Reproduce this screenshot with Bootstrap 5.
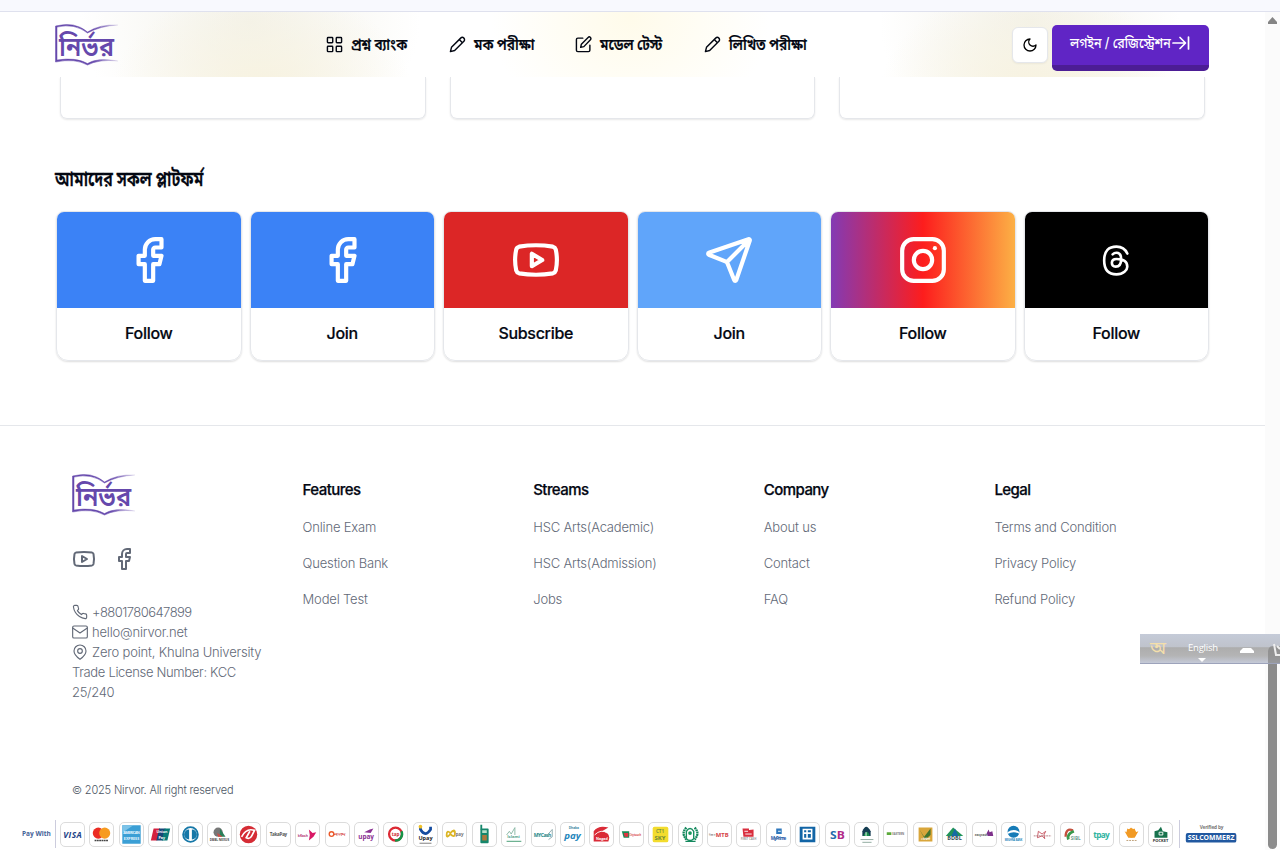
<!DOCTYPE html>
<html lang="bn">
<head>
<meta charset="utf-8">
<meta name="viewport" content="width=device-width, initial-scale=1">
<title>Nirvor</title>
<link href="https://cdn.jsdelivr.net/npm/bootstrap@5.3.0/dist/css/bootstrap.min.css" rel="stylesheet">
<style>
  body{height:850px;overflow:hidden;background:#fff;color:#030712;font-family:Inter,"Noto Sans Bengali","Noto Sans",sans-serif;font-size:13px;line-height:20px}
  .chrome-edge{height:12px;background:#f8f9fe;border-bottom:1px solid #dfe1ee}
  .viewport{height:838px}
  .page-col{width:1265px}
  .track{width:15px;background:#fbfbfb}
  .arrow-up{width:9px;height:7px;margin:5px 0 0 3px;fill:#858585}
  .thumb{width:9px;height:203px;margin:622px 0 0 3px;border-radius:5px;background:#8b8b8b}
  .topbar{height:65px;padding:0 56px 0 55px;background:
    radial-gradient(ellipse 150px 105px at 262px 80px,#f7f2df 0,#f7f2df00 100%),
    radial-gradient(ellipse 170px 130px at 250px 10px,#f3f2ea 0,#f3f2ea00 100%),
    radial-gradient(ellipse 150px 105px at 1030px 80px,#f7f2df 0,#f7f2df00 100%),
    radial-gradient(ellipse 150px 130px at 1030px 10px,#f3f2ea 0,#f3f2ea00 100%),
    radial-gradient(ellipse 140px 120px at 630px 5px,#fffbea 0,#fffbea00 100%),#fff}
  svg.line{fill:none;stroke:currentColor;stroke-width:2;stroke-linecap:round;stroke-linejoin:round;flex:none}
  .logo{width:64px;height:42px;display:block}
  .logo text{font:600 27px "Noto Sans Bengali",sans-serif;fill:#6548ac}
  .narrow{display:inline-block;transform:scaleX(.85);transform-origin:0 50%}
  .menu{position:absolute;left:326px;top:0;height:65px}
  .menu a{color:#030712;text-decoration:none;font-weight:600;font-size:16px;white-space:nowrap}
  .menu a .narrow{margin-top:-2px;-webkit-text-stroke:.2px #030712}
  .menu svg{width:17px;height:17px;margin-right:8px}
  .moon{width:36px;height:36px;border:1px solid #e5e7eb;border-radius:6px;background:#fff;box-shadow:0 1px 2px #0000000d}
  .login{width:157px;height:46px;padding:0 0 3px 18px;border:0;border-bottom:6px solid #4c1d95;border-radius:5px;background:#6025c5;color:#fff;font-weight:500;font-size:14px;white-space:nowrap}
  .login .narrow{width:102px;text-align:left;transform:scaleX(.885)}
  .stubs{padding:0 60px;gap:24px}
  .stub{flex:1;height:42px;border:1px solid #e5e7eb;border-top:0;border-radius:0 0 7px 7px;box-shadow:0 1px 2px #00000018}
  .heading{margin:46px 0 0 55px;height:28px;line-height:28px;font-size:20px;font-weight:600}
  .heading .narrow{transform:scaleX(.795);-webkit-text-stroke:.3px #030712}
  .social{padding:0 56px;gap:8px;margin-top:18px}
  .tile{flex:1;height:150px;border:1px solid #e5e7eb;border-radius:8px 8px 12px 12px;overflow:hidden;box-shadow:0 1px 2px #00000022;font-size:16px;font-weight:500;letter-spacing:-.3px;-webkit-text-stroke:.2px #030712}
  .tile .face{height:96px;color:#fff}
  .tile .cap{height:50px}
  .foot{margin-top:64px;border-top:1px solid #e5e7eb;height:354px;padding:48px 56px 0}
  .fcol{width:230.7px;padding:0 16px;color:#626977;font-weight:300;letter-spacing:-.18px}
  .fcol h6{margin:6px 0 17px;color:#030712;font-size:15px;line-height:20px;font-weight:500;letter-spacing:-.55px;-webkit-text-stroke:.25px #030712}
  .fcol a{display:block;margin-bottom:16px;color:inherit;text-decoration:none}
  .contact svg{width:16px;height:16px;margin-right:4px;stroke-width:1.7}
  .copy{margin:1px 72px 0;color:#4b5563;font-size:11px;font-weight:300;line-height:20px;letter-spacing:-.17px}
  .pay{margin-top:20px;height:28px;padding-left:22px;color:#456297;font-size:7px}
  .pay .with{width:34px;height:28px;border-right:1px solid #ccd;font:bold 6.5px/28px "Open Sans",sans-serif}
  .pay .chips{gap:4.42px;margin-left:4px}
  .pay .chips svg{width:25px;height:25px;border:1px solid #dcdcdc;border-radius:5px;background:#fff;flex:none}
  .pay .verified{margin-left:6px;padding-left:2px;border-left:1px solid #ccd;height:28px}
  .pay text{font-family:"Open Sans",sans-serif;font-weight:700;text-anchor:middle}
  .ime{position:absolute;left:1140px;top:634px;width:140px;height:30px;overflow:hidden;border-bottom:1px solid #9da3bb;background:linear-gradient(#c5cbd8 0,#bfc3cc 45%,#adadad 47%,#b4b4b5 75%,#c5cad8 100%)}
</style>
</head>
<body>
<svg width="0" height="0" class="position-absolute">
  <defs><linearGradient id="lg" x1="0" x2="1"><stop offset=".6" stop-color="#6548ac"/><stop offset="1" stop-color="#6548ac" stop-opacity=".15"/></linearGradient></defs>
  <symbol id="book" viewBox="0 0 64 42">
    <path d="M.5 38V2Q20-3 32.500 8Q45 0 63 1Q45 2 32.500 9Q20-1 2 3V36Q21 33 32.500 39.500Q43 33 63 37Q44 35 32.500 41Q20 34 .5 38Z" fill="url(#lg)" stroke="url(#lg)" stroke-width=".5"/>
  </symbol>
  <symbol id="fb" viewBox="0 0 24 24"><path d="M18 2h-3a5 5 0 0 0-5 5v3H7v4h3v8h4v-8h3l1-4h-4V7a1 1 0 0 1 1-1h3z"/></symbol>
  <symbol id="yt" viewBox="0 0 24 24"><path d="M2.500 17a24.120 24.120 0 0 1 0-10 2 2 0 0 1 1.400-1.400 49.560 49.560 0 0 1 16.200 0A2 2 0 0 1 21.500 7a24.120 24.120 0 0 1 0 10 2 2 0 0 1-1.400 1.400 49.550 49.550 0 0 1-16.200 0A2 2 0 0 1 2.500 17M10 15l5-3-5-3z"/></symbol>
  <symbol id="pencil" viewBox="0 0 24 24"><path d="M2 22l1.500-6L16.500 3a3 3 0 0 1 4.500 4.500L8 20.500zM14.500 5l4.500 4.500"/></symbol>
</svg>

<div class="chrome-edge"></div>
<div class="viewport d-flex">
  <div class="page-col position-relative">
    <nav class="topbar position-relative d-flex align-items-center">
      <svg class="logo" viewBox="0 0 64 42"><use href="#book"/><text x="4" y="32" textLength="55" lengthAdjust="spacingAndGlyphs">নির্ভর</text></svg>
      <div class="menu d-flex align-items-center">
        <a class="d-flex align-items-center" style="width:123px" href="#"><svg class="line" viewBox="0 0 24 24"><rect x="2" y="2" width="7.500" height="7.500" rx="1"/><rect x="14.500" y="2" width="7.500" height="7.500" rx="1"/><rect x="14.500" y="14.500" width="7.500" height="7.500" rx="1"/><rect x="2" y="14.500" width="7.500" height="7.500" rx="1"/></svg><span class="narrow">প্রশ্ন ব্যাংক</span></a>
        <a class="d-flex align-items-center" style="width:126px" href="#"><svg class="line"><use href="#pencil"/></svg><span class="narrow">মক পরীক্ষা</span></a>
        <a class="d-flex align-items-center" style="width:129px" href="#"><svg class="line" viewBox="0 0 24 24"><path d="M11 3H4a2 2 0 0 0-2 2v15a2 2 0 0 0 2 2h15a2 2 0 0 0 2-2v-7M8 16l1-4.500 9.500-9.500a2.200 2.200 0 0 1 3.300 3.300L12.500 15z"/></svg><span class="narrow">মডেল টেস্ট</span></a>
        <a class="d-flex align-items-center" href="#"><svg class="line"><use href="#pencil"/></svg><span class="narrow">লিখিত পরীক্ষা</span></a>
      </div>
      <button class="moon ms-auto me-1 p-0 d-flex align-items-center justify-content-center"><svg class="line" width="16" height="16" viewBox="0 0 24 24"><path d="M12 3a6 6 0 0 0 9 9 9 9 0 1 1-9-9Z"/></svg></button>
      <button class="login d-flex align-items-center" style="margin-top:6px"><span class="narrow">লগইন / রেজিস্ট্রেশন</span><svg class="line" width="18" height="16" viewBox="0 0 18 16"><path d="M1 8h12M8 2.500L13.500 8 8 13.500M16.500 2v12" stroke-width="1.700"/></svg></button>
    </nav>
    <div class="stubs d-flex"><div class="stub"></div><div class="stub"></div><div class="stub"></div></div>

    <h2 class="heading"><span class="narrow">আমাদের সকল প্লাটফর্ম</span></h2>
    <div class="social d-flex text-center">
      <div class="tile"><div class="face d-flex align-items-center justify-content-center" style="background:#3b82f6"><svg class="line" width="50" height="50"><use href="#fb"/></svg></div><div class="cap d-flex align-items-center justify-content-center">Follow</div></div>
      <div class="tile"><div class="face d-flex align-items-center justify-content-center" style="background:#3b82f6"><svg class="line" width="50" height="50"><use href="#fb"/></svg></div><div class="cap d-flex align-items-center justify-content-center">Join</div></div>
      <div class="tile"><div class="face d-flex align-items-center justify-content-center" style="background:#dc2626"><svg class="line" width="50" height="50"><use href="#yt"/></svg></div><div class="cap d-flex align-items-center justify-content-center">Subscribe</div></div>
      <div class="tile"><div class="face d-flex align-items-center justify-content-center" style="background:#60a5fa"><svg class="line" width="50" height="50" viewBox="0 0 24 24"><path d="M14.536 21.686a.5.5 0 0 0 .937-.024l6.500-19a.496.496 0 0 0-.635-.635l-19 6.500a.5.5 0 0 0-.024.937l7.930 3.180a2 2 0 0 1 1.112 1.110zM21.854 2.147l-10.940 10.939"/></svg></div><div class="cap d-flex align-items-center justify-content-center">Join</div></div>
      <div class="tile"><div class="face d-flex align-items-center justify-content-center" style="background:linear-gradient(90deg,#833ab4,#fd1d1d 50%,#fcb045)"><svg class="line" width="50" height="50" viewBox="0 0 24 24"><rect x="2" y="2" width="20" height="20" rx="5.500"/><circle cx="12" cy="12" r="4.400"/><path d="M17.700 6.300h.01"/></svg></div><div class="cap d-flex align-items-center justify-content-center">Follow</div></div>
      <div class="tile"><div class="face d-flex align-items-center justify-content-center" style="background:#000"><svg class="line" width="37" height="37" viewBox="0 0 24 24" style="stroke-width:1.7"><path d="M19 7.500C17.667 4.500 15.333 3 12 3c-5 0-8 2.500-8 9s3.500 9 8 9 7-3 7-5-1-5-7-5c-2.500 0-3 1.250-3 2.500 0 1.500 1 2.500 2.500 2.500 2.500 0 3.500-1.500 3.500-5s-2-4-3-4-1.833.333-2.500 1"/></svg></div><div class="cap d-flex align-items-center justify-content-center">Follow</div></div>
    </div>

    <footer class="foot d-flex">
      <div class="fcol">
        <svg class="logo" viewBox="0 0 64 42"><use href="#book"/><text x="4" y="32" textLength="55" lengthAdjust="spacingAndGlyphs">নির্ভর</text></svg>
        <div class="d-flex gap-3" style="margin:31px 0 31px"><svg class="line" width="24" height="24"><use href="#yt"/></svg><svg class="line" width="24" height="24"><use href="#fb"/></svg></div>
        <div class="contact">
          <div class="d-flex align-items-center" style="letter-spacing:-.55px"><svg class="line" viewBox="0 0 24 24"><path d="M22 16.920v3a2 2 0 0 1-2.180 2 19.790 19.790 0 0 1-8.630-3.070 19.500 19.500 0 0 1-6-6 19.790 19.790 0 0 1-3.070-8.670A2 2 0 0 1 4.110 2h3a2 2 0 0 1 2 1.720 12.840 12.840 0 0 0 .7 2.810 2 2 0 0 1-.45 2.110L8.090 9.910a16 16 0 0 0 6 6l1.270-1.270a2 2 0 0 1 2.110-.45 12.840 12.840 0 0 0 2.810.7A2 2 0 0 1 22 16.920z"/></svg>+8801780647899</div>
          <div class="d-flex align-items-center"><svg class="line" viewBox="0 0 24 24"><rect x="1" y="3" width="22" height="18" rx="2"/><path d="M1 6l11 7.500L23 6"/></svg>hello@nirvor.net</div>
          <div class="d-flex align-items-center text-nowrap"><svg class="line" viewBox="0 0 24 24"><path d="M21 10.500c0 5-5.500 10-9 12.500-3.500-2.500-9-7.500-9-12.500a9 9 0 0 1 18 0z"/><circle cx="12" cy="10.500" r="3.500"/></svg>Zero point, Khulna University</div>
          <div style="letter-spacing:-.33px">Trade License Number: KCC<br>25/240</div>
        </div>
      </div>
      <div class="fcol"><h6>Features</h6><a href="#">Online Exam</a><a href="#">Question Bank</a><a href="#">Model Test</a></div>
      <div class="fcol"><h6>Streams</h6><a href="#">HSC Arts(Academic)</a><a href="#">HSC Arts(Admission)</a><a href="#">Jobs</a></div>
      <div class="fcol"><h6>Company</h6><a href="#">About us</a><a href="#">Contact</a><a href="#">FAQ</a></div>
      <div class="fcol"><h6>Legal</h6><a href="#">Terms and Condition</a><a href="#">Privacy Policy</a><a href="#">Refund Policy</a></div>
    </footer>
    <div class="copy">© 2025 Nirvor. All right reserved</div>

    <div class="pay d-flex align-items-center">
      <div class="with">Pay With</div>
      <div class="chips d-flex">
        <svg viewBox="0 0 25 25"><text x="12.500" y="16" font-size="9" font-style="italic" textLength="20" fill="#1b4287">VISA</text></svg>
        <svg viewBox="0 0 25 25"><circle cx="9" cy="11" r="6" fill="#eb2c23"/><circle cx="16" cy="11" r="6" fill="#f79b20"/><path d="M5 19h15" stroke="#444" stroke-width="1.500" stroke-dasharray="2 .5"/></svg>
        <svg viewBox="0 0 25 25"><path fill="#3b9fd5" d="M2.500 2.500h20v20h-20z"/><path fill="#7cc3e8" d="M2.500 2.500h12l-12 8z"/><text x="12.500" y="12" font-size="4" textLength="18" fill="#e8f6ff">AMERICAN</text><text x="12.500" y="18" font-size="4" fill="#e8f6ff">EXPRESS</text></svg>
        <svg viewBox="0 0 25 25"><path fill="#d4213f" d="M5 6h7L9 19H2z"/><path fill="#174777" d="M11 6h7l-3 13H8z"/><path fill="#087b78" d="M17 6h6l-3 13h-6z"/><text x="14" y="11" font-size="4" fill="#fff">Union</text><text x="14" y="17" font-size="4" fill="#fff">Pay</text></svg>
        <svg viewBox="0 0 25 25"><circle cx="12.500" cy="12.500" r="8" fill="#fff" stroke="#1678a8" stroke-width="2"/><path d="M11 7a5.500 5.500 0 0 0 0 11zM14 7a5.500 5.500 0 0 1 0 11z" fill="#1678a8"/></svg>
        <svg viewBox="0 0 25 25"><circle cx="11" cy="10" r="5" fill="#777"/><path d="M13 6l6 9h-6z" fill="#287f59"/><path d="M10 11l6 4-5 0z" fill="#d54a44"/><text x="12.500" y="20" font-size="4" textLength="21" lengthAdjust="spacingAndGlyphs" fill="#444">DBBL NEXUS</text></svg>
        <svg viewBox="0 0 25 25"><circle cx="12.500" cy="12.500" r="9.500" fill="#d52c35"/><path d="M5 15q5-10 14-7l-3 6q-2 4-6 2l4-7" fill="none" stroke="#fff" stroke-width="1.800"/></svg>
        <svg viewBox="0 0 25 25"><text x="12.500" y="14" font-size="5" textLength="19" fill="#555">TakaPay</text></svg>
        <svg viewBox="0 0 25 25"><text x="7.500" y="15" font-size="4.500" textLength="11" lengthAdjust="spacingAndGlyphs" fill="#b53c75">bKash</text><path d="M14 7l4 4 4-1-3 5-5 4 1-6z" fill="#d91965"/></svg>
        <svg viewBox="0 0 25 25"><circle cx="6" cy="12" r="2.500" fill="none" stroke="#ec5a2a" stroke-width="1.500"/><text x="15.500" y="14" font-size="5" textLength="13" lengthAdjust="spacingAndGlyphs" fill="#d3453c">নগদ</text></svg>
        <svg viewBox="0 0 25 25"><text x="12" y="17" font-size="7" textLength="17" fill="#8b3293">upay</text><path d="M10 10l6-3 4-1-3 5" fill="#8b3293"/></svg>
        <svg viewBox="0 0 25 25"><circle cx="12.500" cy="12" r="7" fill="none" stroke="#dc2a35" stroke-width="2.500"/><path d="M19 9a7 7 0 0 1-7 10" fill="none" stroke="#159447" stroke-width="2.500"/><text x="12.500" y="14" font-size="5" fill="#d12b31">tap</text></svg>
        <svg viewBox="0 0 25 25"><path d="M7 4v3q5 9 11 0V4" fill="none" stroke="#154ca0" stroke-width="3"/><circle cx="7" cy="4" r="2" fill="#f0c128"/><text x="12.500" y="19" font-size="6" fill="#222">Upay</text><path d="M6 22h13" stroke="#777"/></svg>
        <svg viewBox="0 0 25 25"><path d="M4 13q0-6 4-2 5-6 5 0 0 6-5 1-4 5-4 1M10 9h3" fill="none" stroke="#dcb626" stroke-width="2"/><text x="18" y="14" font-size="5" fill="#777">pay</text></svg>
        <svg viewBox="0 0 25 25"><rect x="8" y="6" width="9" height="16" rx="1" fill="#16876c"/><path d="M9 2v5" stroke="#16876c" stroke-width="2"/><path d="M10 8h5v3h-5z" fill="#b8dfc9"/><path d="M10 13h5v6h-5z" fill="#ad783c"/></svg>
        <svg viewBox="0 0 25 25"><path d="M5 13l3-4 2 3 4-7v8" fill="none" stroke="#87b6a4"/><text x="12.500" y="16" font-size="4.500" fill="#57a18b">Islami</text><path d="M5 20h16" stroke="#6eb292" stroke-width="1.500"/></svg>
        <svg viewBox="0 0 25 25"><text x="11.500" y="15" font-size="5.500" textLength="19" fill="#218889">MYCash</text><path d="M15 15l7-8v8l-4 3" fill="none" stroke="#8ca9ac"/></svg>
        <svg viewBox="0 0 25 25"><text x="14" y="6" font-size="3.500" fill="#358aa0">Dhaka</text><text x="12.500" y="17" font-size="10" font-style="italic" textLength="18" lengthAdjust="spacingAndGlyphs" fill="#2485bb">pay</text></svg>
        <svg viewBox="0 0 25 25"><path d="M4 20V9q5-7 16-4l-7 4q7 0 8 7l-1 4z" fill="#da2b37"/><path d="M5 13q7-7 14-2" stroke="#fff" fill="none"/><text x="13" y="19" font-size="4" fill="#fff">Nagad</text></svg>
        <svg viewBox="0 0 25 25"><path d="M2 9h8v7H4z" fill="#168b54"/><path d="M4 11h5v4H5z" fill="#df3440"/><text x="16.500" y="14" font-size="4" textLength="13" lengthAdjust="spacingAndGlyphs" fill="#d8474b">Citytouch</text></svg>
        <svg viewBox="0 0 25 25"><rect x="4" y="4" width="17" height="17" rx="2" fill="#f3dc2d"/><text x="12" y="10.500" font-size="5" fill="#7c9340">CT1</text><text x="12" y="18" font-size="6.500" fill="#6e8a38">SKY</text></svg>
        <svg viewBox="0 0 25 25"><path d="M8 5Q2 11 8 18M17 5q6 6 0 13" fill="none" stroke="#13875d" stroke-width="2.500" stroke-dasharray="2 .6"/><path d="M8 17V9q4-6 8 0v8q-4 4-8 0z" fill="none" stroke="#168f61" stroke-width="1.500"/><circle cx="12" cy="11" r="2" fill="#16965d"/><path d="M7 20h11" stroke="#13875d" stroke-width="1.500"/></svg>
        <svg viewBox="0 0 25 25"><text x="4.500" y="14" font-size="3.500" textLength="6" lengthAdjust="spacingAndGlyphs" fill="#777">উন্নয়ন</text><text x="15.500" y="15" font-size="6.500" textLength="14" lengthAdjust="spacingAndGlyphs" fill="#d44145">MTB</text></svg>
        <svg viewBox="0 0 25 25"><path d="M6 6h7v9H7zM11 8l7-1v8h-6z" fill="#d92e3e"/><path d="M8 9h4M9 12h7" stroke="#fff"/><text x="12.500" y="19" font-size="3.500" textLength="17" lengthAdjust="spacingAndGlyphs" fill="#999">FIRST CASH</text></svg>
        <svg viewBox="0 0 25 25"><path d="M10 6h6v6h-6z" fill="#2f78bd"/><path d="M12 9h3" stroke="#fff"/><text x="12.500" y="18" font-size="5" textLength="17" fill="#275ba7">MyPrime</text></svg>
        <svg viewBox="0 0 25 25"><path d="M4 4h17v17H4z" fill="#1265a6"/><path d="M8 7h9v10H8zM12 7v10M8 11h9" fill="none" stroke="#fff" stroke-width="1.700"/></svg>
        <svg viewBox="0 0 25 25"><text x="12.500" y="17" font-size="12" textLength="16" lengthAdjust="spacingAndGlyphs"><tspan fill="#246cab">S</tspan><tspan fill="#b12c8a">B</tspan></text></svg>
        <svg viewBox="0 0 25 25"><path d="M8 14V9q4-10 9 0v5z" fill="#153d52"/><path d="M9 14q4-9 7 0" fill="#188c4c"/><path d="M12 10v4" stroke="#fff"/><path d="M6 18h14M8 21h10" stroke="#8aa69b"/></svg>
        <svg viewBox="0 0 25 25"><path d="M3 10h5v3H3z" fill="#5caa3b"/><text x="15.500" y="13" font-size="3.500" textLength="13" lengthAdjust="spacingAndGlyphs" fill="#777">EASTERN</text></svg>
        <svg viewBox="0 0 25 25"><path d="M5 5h15v15H5z" fill="#d9a63b"/><path d="M6 7l5 8 7-9v7l-6 5z" fill="#42742d"/><text x="12" y="19" font-size="4" fill="#fff">মেঘনা</text></svg>
        <svg viewBox="0 0 25 25"><path d="M3 14l8-9 11 9z" fill="#219457"/><path d="M9 14l4-8 4 8" fill="#176aa4"/><text x="12.500" y="19" font-size="6" fill="#334f55">BDBL</text></svg>
        <svg viewBox="0 0 25 25"><text x="9" y="14" font-size="4" textLength="14" lengthAdjust="spacingAndGlyphs" fill="#555">easycash</text><path d="M15 11l2-4 1 3 3-1 1 5h-6z" fill="#7e318b"/></svg>
        <svg viewBox="0 0 25 25"><circle cx="12.500" cy="9.500" r="6.500" fill="#167bb7"/><path d="M6 10q7-5 13 0v2q-6-4-13 0z" fill="#fff"/><text x="12.500" y="20" font-size="3.500" textLength="19" lengthAdjust="spacingAndGlyphs" fill="#1480b8">MEGHNA BANK</text></svg>
        <svg viewBox="0 0 25 25"><path d="M8 9l4 3 4-3-2 4 1 4-3-3-5 2z" fill="none" stroke="#c65460"/><path d="M3 14h19" stroke="#b3777c" stroke-dasharray="2 .7"/></svg>
        <svg viewBox="0 0 25 25"><path d="M5 15Q5 5 13 8" fill="none" stroke="#c3503d" stroke-width="2.500"/><path d="M8 18q-2-6 6-9" fill="none" stroke="#3a994c" stroke-width="3"/><text x="16" y="19" font-size="5" fill="#6b9e8f">SIBL</text></svg>
        <svg viewBox="0 0 25 25"><text x="12.500" y="16" font-size="9" textLength="18" fill="#2fb39f">tpay</text></svg>
        <svg viewBox="0 0 25 25"><circle cx="12.500" cy="11" r="5" fill="#f4a326"/><path d="M5 9l4 7h7l4-7-3 1-1-4-2 1-2-2-2 2-2-1-1 4z" fill="#f19a25"/><path d="M7 19h12" stroke="#bb9c72" stroke-dasharray="2 1"/></svg>
        <svg viewBox="0 0 25 25"><path d="M6 16V9l4-1 3-4 2 5 5 1v6z" fill="#17724d"/><path d="M11 10h4v3h-4z" fill="none" stroke="#fff"/><text x="12.500" y="21" font-size="4.500" textLength="17" lengthAdjust="spacingAndGlyphs" fill="#333">POCKET</text></svg>
      </div>
      <svg class="verified" width="64" height="28" viewBox="0 0 64 28"><text x="31" y="9" font-size="5" font-weight="400" textLength="25" fill="#777">Verified by</text><rect x="4" y="13" width="53" height="10" rx="2" fill="#2158a0"/><text x="30.500" y="20.500" font-size="7" textLength="49" lengthAdjust="spacingAndGlyphs" fill="#fff">SSLCOMMERZ</text></svg>
    </div>
  </div>
  <div class="track"><svg class="arrow-up d-block" viewBox="0 0 9 7"><path d="M4.500 0L9 5v2H0V5z"/></svg><div class="thumb"></div></div>
</div>
<div class="ime">
  <svg width="140" height="30" viewBox="0 0 140 30"><text x="10" y="20" font-size="17" font-family="Noto Sans Bengali,sans-serif" fill="#f4dfab" textLength="16" lengthAdjust="spacingAndGlyphs">অ</text><text x="48" y="17" font-size="9.500" textLength="30" font-family="Open Sans,sans-serif" fill="#fff">English</text><path d="M58 24h8l-4 4zM100 19v-2l3-3h8l3 3v2z" fill="#fff"/><path d="M128 30V17q1-5 5-5h7v18z" fill="#858585" opacity=".7"/><path d="M134 10l2 11h4M137 12l3 3" stroke="#eee" stroke-width="2" fill="none"/></svg>
</div>
<script src="https://cdn.jsdelivr.net/npm/bootstrap@5.3.0/dist/js/bootstrap.bundle.min.js"></script>
</body>
</html>
